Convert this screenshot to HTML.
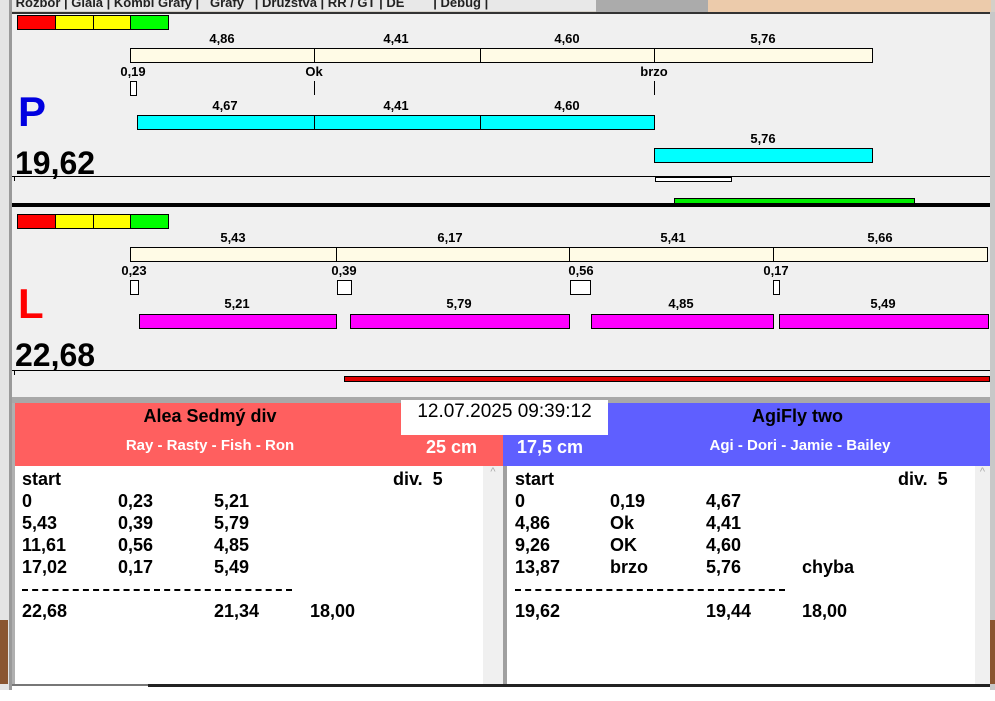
<!DOCTYPE html>
<html><head><meta charset="utf-8"><style>
*{margin:0;padding:0;box-sizing:border-box}
body{width:995px;height:701px;background:#fff;position:relative;overflow:hidden;font-family:"Liberation Sans",Arial,sans-serif;font-weight:bold;color:#000}
.a{position:absolute}
.lb{position:absolute;font-size:13px;transform:translateX(-50%);white-space:nowrap;line-height:14px}
.bx{position:absolute;border:1px solid #000}
.t{position:absolute;font-size:18px;line-height:22px;white-space:nowrap}
</style></head><body>
<div class="a" style="left:0;top:0;width:995px;height:12px;background:#d4d0c8"></div>
<div class="a" style="left:596px;top:0;width:112px;height:12px;background:#ababab"></div>
<div class="a" style="left:708px;top:0;width:283px;height:12px;background:#eccbab"></div>
<div class="a" style="left:12px;top:0;width:584px;height:11px;background:#e8e8e8;font-size:13px;line-height:6px;overflow:hidden;color:#222;white-space:nowrap">&nbsp;Rozbor | Glala | Kombi Grafy |&nbsp;&nbsp;&nbsp;Grafy&nbsp;&nbsp; | Družstva | RR / GT | DE&nbsp;&nbsp;&nbsp;&nbsp;&nbsp;&nbsp;&nbsp; | Debug |</div>
<div class="a" style="left:0;top:0;width:12px;height:690px;background:#e4e4e4"></div>
<div class="a" style="left:9px;top:0;width:3px;height:690px;background:#9a9a9a"></div>
<div class="a" style="left:12px;top:398px;width:3px;height:288px;background:#b0b0b0"></div>
<div class="a" style="left:0;top:620px;width:8px;height:64px;background:#8a5530"></div>
<div class="a" style="left:990px;top:12px;width:5px;height:678px;background:#c8c8c8"></div>
<div class="a" style="left:990px;top:620px;width:5px;height:64px;background:#8a5530"></div>
<div class="a" style="left:12px;top:12px;width:978px;height:386px;background:#f0f0f0;border-top:2px solid #333"></div>
<div class="a" style="left:12px;top:397px;width:978px;height:6px;background:#a8a8a8"></div>

<div class="bx" style="left:17px;top:15px;width:39px;height:15px;background:#f00"></div>
<div class="bx" style="left:55px;top:15px;width:39px;height:15px;background:#ff0"></div>
<div class="bx" style="left:93px;top:15px;width:38px;height:15px;background:#ff0"></div>
<div class="bx" style="left:130px;top:15px;width:39px;height:15px;background:#0f0"></div>
<div class="lb" style="left:222px;top:32px">4,86</div>
<div class="lb" style="left:396px;top:32px">4,41</div>
<div class="lb" style="left:567px;top:32px">4,60</div>
<div class="lb" style="left:763px;top:32px">5,76</div>
<div class="bx" style="left:130px;top:48px;width:185px;height:15px;background:#fffbe6"></div>
<div class="bx" style="left:314px;top:48px;width:167px;height:15px;background:#fffbe6"></div>
<div class="bx" style="left:480px;top:48px;width:175px;height:15px;background:#fffbe6"></div>
<div class="bx" style="left:654px;top:48px;width:219px;height:15px;background:#fffbe6"></div>
<div class="lb" style="left:133px;top:65px">0,19</div>
<div class="lb" style="left:314px;top:65px">Ok</div>
<div class="lb" style="left:654px;top:65px">brzo</div>
<div class="bx" style="left:130px;top:81px;width:7px;height:15px;background:#fff"></div>
<div class="a" style="left:314px;top:81px;width:1px;height:14px;background:#000"></div>
<div class="a" style="left:654px;top:81px;width:1px;height:14px;background:#000"></div>
<div class="a" style="left:18px;top:89px;font-size:42px;color:#0000e0;line-height:46px">P</div>
<div class="lb" style="left:225px;top:99px">4,67</div>
<div class="lb" style="left:396px;top:99px">4,41</div>
<div class="lb" style="left:567px;top:99px">4,60</div>
<div class="bx" style="left:137px;top:115px;width:178px;height:15px;background:#0ff"></div>
<div class="bx" style="left:314px;top:115px;width:167px;height:15px;background:#0ff"></div>
<div class="bx" style="left:480px;top:115px;width:175px;height:15px;background:#0ff"></div>
<div class="lb" style="left:763px;top:132px">5,76</div>
<div class="bx" style="left:654px;top:148px;width:219px;height:15px;background:#0ff"></div>
<div class="a" style="left:15px;top:144px;font-size:32px;line-height:38px">19,62</div>
<div class="a" style="left:12px;top:176px;width:978px;height:1px;background:#000"></div>
<div class="a" style="left:14px;top:176px;width:1px;height:5px;background:#000"></div>
<div class="bx" style="left:655px;top:177px;width:77px;height:5px;background:#fff"></div>
<div class="bx" style="left:674px;top:198px;width:241px;height:6px;background:#0e0"></div>
<div class="a" style="left:12px;top:203px;width:978px;height:4px;background:#000"></div>

<div class="bx" style="left:17px;top:214px;width:39px;height:15px;background:#f00"></div>
<div class="bx" style="left:55px;top:214px;width:39px;height:15px;background:#ff0"></div>
<div class="bx" style="left:93px;top:214px;width:38px;height:15px;background:#ff0"></div>
<div class="bx" style="left:130px;top:214px;width:39px;height:15px;background:#0f0"></div>
<div class="lb" style="left:233px;top:231px">5,43</div>
<div class="lb" style="left:450px;top:231px">6,17</div>
<div class="lb" style="left:673px;top:231px">5,41</div>
<div class="lb" style="left:880px;top:231px">5,66</div>
<div class="bx" style="left:130px;top:247px;width:207px;height:15px;background:#fffbe6"></div>
<div class="bx" style="left:336px;top:247px;width:234px;height:15px;background:#fffbe6"></div>
<div class="bx" style="left:569px;top:247px;width:205px;height:15px;background:#fffbe6"></div>
<div class="bx" style="left:773px;top:247px;width:215px;height:15px;background:#fffbe6"></div>
<div class="lb" style="left:134px;top:264px">0,23</div>
<div class="lb" style="left:344px;top:264px">0,39</div>
<div class="lb" style="left:581px;top:264px">0,56</div>
<div class="lb" style="left:776px;top:264px">0,17</div>
<div class="bx" style="left:130px;top:280px;width:9px;height:15px;background:#fff"></div>
<div class="bx" style="left:337px;top:280px;width:15px;height:15px;background:#fff"></div>
<div class="bx" style="left:570px;top:280px;width:21px;height:15px;background:#fff"></div>
<div class="bx" style="left:773px;top:280px;width:7px;height:15px;background:#fff"></div>
<div class="a" style="left:18px;top:281px;font-size:42px;color:#f00;line-height:46px">L</div>
<div class="lb" style="left:237px;top:297px">5,21</div>
<div class="lb" style="left:459px;top:297px">5,79</div>
<div class="lb" style="left:681px;top:297px">4,85</div>
<div class="lb" style="left:883px;top:297px">5,49</div>
<div class="bx" style="left:139px;top:314px;width:198px;height:15px;background:#f0f"></div>
<div class="bx" style="left:350px;top:314px;width:220px;height:15px;background:#f0f"></div>
<div class="bx" style="left:591px;top:314px;width:183px;height:15px;background:#f0f"></div>
<div class="bx" style="left:779px;top:314px;width:210px;height:15px;background:#f0f"></div>
<div class="a" style="left:15px;top:336px;font-size:32px;line-height:38px">22,68</div>
<div class="a" style="left:12px;top:370px;width:978px;height:1px;background:#000"></div>
<div class="a" style="left:14px;top:370px;width:1px;height:5px;background:#000"></div>
<div class="bx" style="left:344px;top:376px;width:646px;height:6px;background:#e00000"></div>

<div class="a" style="left:15px;top:403px;width:488px;height:63px;background:#ff5f5f"></div>
<div class="a" style="left:503px;top:403px;width:487px;height:63px;background:#5f5fff"></div>
<div class="a" style="left:15px;top:406px;width:390px;text-align:center;font-size:18px">Alea Sedmý div</div>
<div class="a" style="left:15px;top:437px;width:390px;text-align:center;font-size:15px;color:#fff">Ray - Rasty - Fish - Ron</div>
<div class="a" style="left:426px;top:437px;font-size:18px;color:#fff">25 cm</div>
<div class="a" style="left:517px;top:437px;font-size:18px;color:#fff">17,5 cm</div>
<div class="a" style="left:600px;top:406px;width:395px;text-align:center;font-size:18px">AgiFly two</div>
<div class="a" style="left:600px;top:437px;width:400px;text-align:center;font-size:15px;color:#fff">Agi - Dori - Jamie - Bailey</div>
<div class="a" style="left:401px;top:400px;width:207px;height:35px;background:#fff;font-weight:normal;font-size:19px;text-align:center;line-height:24px">12.07.2025 09:39:12</div>

<div class="a" style="left:15px;top:466px;width:468px;height:218px;background:#fff"></div>
<div class="a" style="left:483px;top:466px;width:20px;height:218px;background:#f0f0f0;color:#aaa;font-size:11px;text-align:center;font-weight:normal">^</div>
<div class="a" style="left:503px;top:466px;width:4px;height:218px;background:#a0a0a0"></div>
<div class="a" style="left:507px;top:466px;width:468px;height:218px;background:#fff"></div>
<div class="a" style="left:975px;top:466px;width:15px;height:218px;background:#f0f0f0;color:#aaa;font-size:11px;text-align:center;font-weight:normal">^</div>
<div class="a" style="left:12px;top:684px;width:136px;height:2px;background:#777"></div>
<div class="a" style="left:148px;top:684px;width:842px;height:3px;background:#222"></div>

<div class="t" style="left:22px;top:468px">start</div><div class="t" style="left:393px;top:468px">div.&nbsp; 5</div>
<div class="t" style="left:22px;top:490px">0</div><div class="t" style="left:118px;top:490px">0,23</div><div class="t" style="left:214px;top:490px">5,21</div>
<div class="t" style="left:22px;top:512px">5,43</div><div class="t" style="left:118px;top:512px">0,39</div><div class="t" style="left:214px;top:512px">5,79</div>
<div class="t" style="left:22px;top:534px">11,61</div><div class="t" style="left:118px;top:534px">0,56</div><div class="t" style="left:214px;top:534px">4,85</div>
<div class="t" style="left:22px;top:556px">17,02</div><div class="t" style="left:118px;top:556px">0,17</div><div class="t" style="left:214px;top:556px">5,49</div>
<div class="a" style="left:22px;top:589px;width:270px;border-top:2px dashed #000"></div>
<div class="t" style="left:22px;top:600px">22,68</div><div class="t" style="left:214px;top:600px">21,34</div><div class="t" style="left:310px;top:600px">18,00</div>

<div class="t" style="left:515px;top:468px">start</div><div class="t" style="left:898px;top:468px">div.&nbsp; 5</div>
<div class="t" style="left:515px;top:490px">0</div><div class="t" style="left:610px;top:490px">0,19</div><div class="t" style="left:706px;top:490px">4,67</div>
<div class="t" style="left:515px;top:512px">4,86</div><div class="t" style="left:610px;top:512px">Ok</div><div class="t" style="left:706px;top:512px">4,41</div>
<div class="t" style="left:515px;top:534px">9,26</div><div class="t" style="left:610px;top:534px">OK</div><div class="t" style="left:706px;top:534px">4,60</div>
<div class="t" style="left:515px;top:556px">13,87</div><div class="t" style="left:610px;top:556px">brzo</div><div class="t" style="left:706px;top:556px">5,76</div><div class="t" style="left:802px;top:556px">chyba</div>
<div class="a" style="left:515px;top:589px;width:270px;border-top:2px dashed #000"></div>
<div class="t" style="left:515px;top:600px">19,62</div><div class="t" style="left:706px;top:600px">19,44</div><div class="t" style="left:802px;top:600px">18,00</div>
</body></html>
